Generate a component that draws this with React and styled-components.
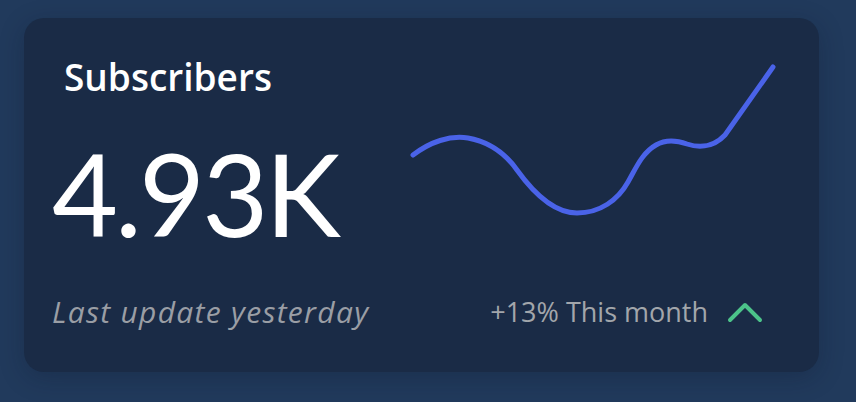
import React from 'react';
import styled, { createGlobalStyle } from 'styled-components';

const GlobalStyle = createGlobalStyle`
  html, body {
    margin: 0;
    padding: 0;
    background-color: #213a5c;
  }
  body {
    min-height: 100vh;
    font-family: 'Lato', 'Open Sans', sans-serif;
  }
`;

const Page = styled.div`
  padding: 18px 37px 30px 24px;
`;

const Card = styled.section`
  box-sizing: border-box;
  width: 795px;
  height: 354px;
  padding: 32px 28px 0 28px;
  background-color: #1a2b46;
  border-radius: 20px;
  box-shadow: 0 6px 24px rgba(10, 20, 40, 0.25);
  display: grid;
  grid-template-columns: 348px 1fr;
  grid-template-rows: 212px auto;
  align-items: start;
`;

const Summary = styled.div`
  display: flex;
  flex-direction: column;
`;

const Title = styled.h2`
  margin: 5px 0 0 12px;
  font-family: 'Open Sans', sans-serif;
  font-weight: 600;
  font-size: 37px;
  line-height: 44px;
  color: #ffffff;
`;

const Value = styled.div`
  margin-top: 37px;
  font-family: 'Lato', sans-serif;
  font-weight: 400;
  font-size: 114px;
  line-height: 1;
  color: #ffffff;
  letter-spacing: -3px;
`;

const Chart = styled.svg`
  display: block;
  width: 391px;
  height: 175px;
`;

const Updated = styled.p`
  margin: 33px 0 0 0;
  font-family: 'Open Sans', sans-serif;
  font-style: italic;
  font-size: 30px;
  line-height: 34px;
  letter-spacing: 1.3px;
  color: #9a9ea5;
  white-space: nowrap;
`;

const Trend = styled.div`
  margin-top: 33px;
  display: flex;
  align-items: center;
  justify-content: flex-end;
  gap: 19px;
  padding-right: 28px;
  font-family: 'Open Sans', sans-serif;
  font-size: 27px;
  line-height: 34px;
  color: #a2a6ab;
`;

const Chevron = styled.svg`
  display: block;
  width: 36px;
  height: 22px;
`;

const SPARK =
  'M13 105 C30 92 50 85 68 88 C90 92 105 103 117 120 C135 145 155 163 177 163 ' +
  'C200 163 218 150 228 132 C236 118 242 103 256 95 C266 89 276 90 287 94 ' +
  'C296 97 312 99 325 85 L373 17';

const App = () => (
  <Page>
    <GlobalStyle />
    <Card>
      <Summary>
        <Title>Subscribers</Title>
        <Value>4.93K</Value>
      </Summary>

      <Chart viewBox="0 0 391 175">
        <path d={SPARK} fill="none" stroke="#4a63e8" strokeWidth="5" strokeLinecap="round" strokeLinejoin="round" />
      </Chart>

      <Updated>Last update yesterday</Updated>

      <Trend>
        <span>+13% This month</span>
        <Chevron viewBox="0 0 36 22">
          <polyline points="3,19 18,4 33,19" fill="none" stroke="#4cc38a" strokeWidth="4" strokeLinecap="round" strokeLinejoin="round" />
        </Chevron>
      </Trend>
    </Card>
  </Page>
);

export default App;
